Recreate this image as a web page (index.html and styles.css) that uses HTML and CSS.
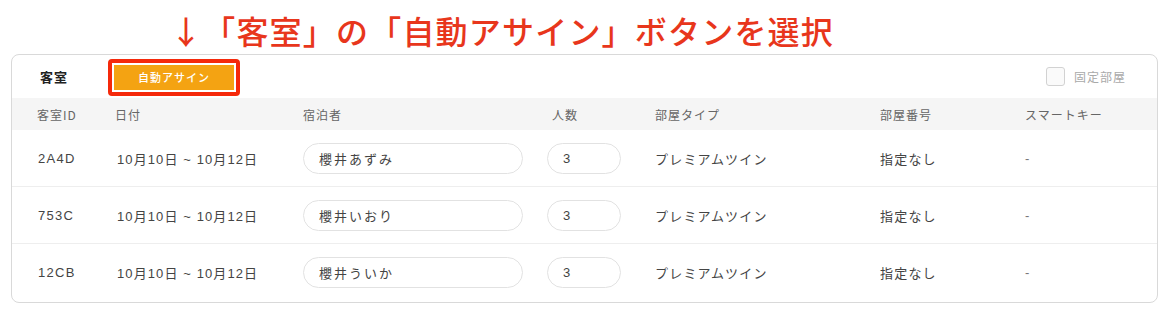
FILE: index.html
```html
<!DOCTYPE html>
<html lang="ja">
<head>
<meta charset="utf-8">
<link rel="stylesheet" href="styles.css">
</head>
<body>
<div class="caption">↓「客室」の「自動アサイン」ボタンを選択</div>
<div class="card">
  <div class="toolbar">
    <div class="tool-left">
      <span class="section-title">客室</span>
      <span class="highlight"><button class="auto-btn">自動アサイン</button></span>
    </div>
    <label class="fixed">
      <span class="checkbox"></span>
      <span class="fixed-label">固定部屋</span>
    </label>
  </div>
  <div class="row head">
    <div>客室ID</div>
    <div>日付</div>
    <div>宿泊者</div>
    <div>人数</div>
    <div>部屋タイプ</div>
    <div>部屋番号</div>
    <div>スマートキー</div>
  </div>
  <div class="row data">
    <div class="id">2A4D</div>
    <div class="date">10月10日 ~ 10月12日</div>
    <div><div class="field name">櫻井あずみ</div></div>
    <div><div class="field num">3</div></div>
    <div class="jp">プレミアムツイン</div>
    <div class="jp">指定なし</div>
    <div class="dash">-</div>
  </div>
  <div class="row data">
    <div class="id">753C</div>
    <div class="date">10月10日 ~ 10月12日</div>
    <div><div class="field name">櫻井いおり</div></div>
    <div><div class="field num">3</div></div>
    <div class="jp">プレミアムツイン</div>
    <div class="jp">指定なし</div>
    <div class="dash">-</div>
  </div>
  <div class="row data last">
    <div class="id">12CB</div>
    <div class="date">10月10日 ~ 10月12日</div>
    <div><div class="field name">櫻井ういか</div></div>
    <div><div class="field num">3</div></div>
    <div class="jp">プレミアムツイン</div>
    <div class="jp">指定なし</div>
    <div class="dash">-</div>
  </div>
</div>
</body>
</html>
```
FILE: styles.css
```css
* { box-sizing: border-box; }
html, body {
  margin: 0;
  padding: 0;
  background: #ffffff;
}
body {
  width: 1168px;
  height: 314px;
  overflow: hidden;
  font-family: "Liberation Sans", "Noto Sans CJK JP", sans-serif;
  color: #333;
}
.caption {
  padding: 10px 0 0 170px;
  height: 54px;
  line-height: 40px;
  font-size: 32px;
  letter-spacing: 1.2px;
  color: #e8361c;
  font-family: "Noto Sans CJK JP", sans-serif;
  font-weight: 500;
  white-space: nowrap;
}
.card {
  margin-left: 11px;
  width: 1147px;
  height: 249px;
  border: 1px solid #d9d9d9;
  border-radius: 8px;
  overflow: hidden;
}
.toolbar {
  height: 43px;
  display: flex;
  align-items: center;
  justify-content: space-between;
  padding: 0 31px 0 28px;
}
.tool-left {
  display: flex;
  align-items: center;
}
.section-title {
  font-family: "Noto Sans CJK JP", sans-serif;
  font-size: 13px;
  font-weight: 700;
  letter-spacing: 1px;
  color: #222;
  width: 68px;
}
.highlight {
  display: inline-flex;
  border: 4px solid #f5290b;
  border-radius: 4px;
  padding: 2px;
  margin-top: 1px;
}
.auto-btn {
  width: 120px;
  height: 25px;
  border: 0;
  background: #f4a312;
  color: #fff;
  font-family: "Noto Sans CJK JP", sans-serif;
  font-size: 11px;
  letter-spacing: 1px;
  padding: 0;
  font-weight: 500;
}
.fixed {
  display: flex;
  align-items: center;
  gap: 9px;
}
.checkbox {
  width: 19px;
  height: 19px;
  border: 1px solid #d2d2d2;
  border-radius: 3px;
  background: #fafafa;
}
.fixed-label {
  font-family: "Noto Sans CJK JP", sans-serif;
  font-size: 12px;
  letter-spacing: 1px;
  color: #a9a9a9;
}
.row {
  display: grid;
  grid-template-columns: 78px 188px 249px 103px 225px 145px 1fr;
  align-items: center;
  padding-left: 25px;
}
.row.head {
  height: 32px;
  background: #f5f5f5;
  font-family: "Noto Sans CJK JP", sans-serif;
  font-size: 12px;
  letter-spacing: 1px;
  color: #666;
}
.row.data {
  height: 57px;
  border-bottom: 1px solid #eeeeee;
  font-size: 13px;
  color: #444;
}
.row.data.last {
  border-bottom: 0;
}
.id {
  letter-spacing: 1.3px;
  padding-left: 1px;
}
.date {
  letter-spacing: 1.1px;
  padding-left: 2px;
}
.jp {
  font-family: "Noto Sans CJK JP", sans-serif;
  letter-spacing: 1.2px;
}
.dash {
  color: #777;
}
.field {
  height: 31px;
  border: 1.5px solid #e2e2e2;
  border-radius: 16px;
  display: flex;
  align-items: center;
  background: #fff;
}
.field.name {
  width: 220px;
  padding-left: 15px;
  font-family: "Noto Sans CJK JP", sans-serif;
  letter-spacing: 2px;
}
.field.num {
  width: 74px;
  margin-left: -5px;
  padding-left: 15px;
}
```
